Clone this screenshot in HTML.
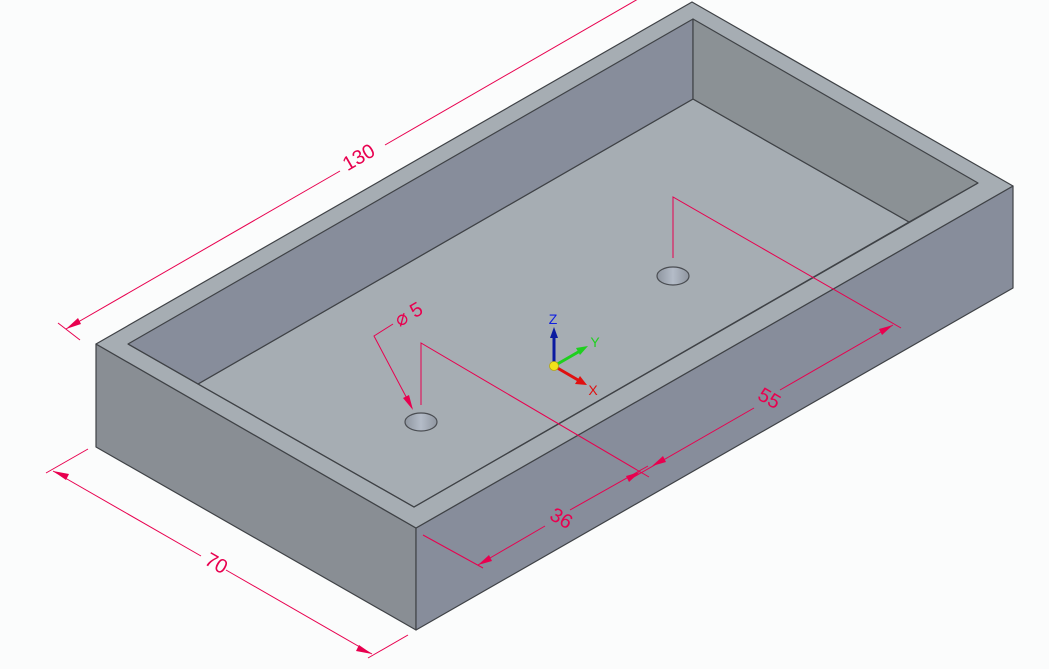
<!DOCTYPE html>
<html><head><meta charset="utf-8"><style>
html,body{margin:0;padding:0;background:#fbfcfc;}
svg{display:block}
text{font-family:"Liberation Sans",sans-serif;}
</style></head><body>
<svg width="1049" height="669" viewBox="0 0 1049 669" xmlns="http://www.w3.org/2000/svg">
<rect width="1049" height="669" fill="#fbfcfc"/>
<defs>
<linearGradient id="hole" x1="0" x2="1" y1="0" y2="0">
<stop offset="0" stop-color="#8f96a0"/><stop offset="0.5" stop-color="#b4bcc8"/><stop offset="1" stop-color="#8f96a0"/>
</linearGradient>
</defs>
<g stroke="#3f4246" stroke-width="1.2" stroke-linejoin="round">
<polygon points="96,344 416,528 416,630 96,447" fill="#898e94"/>
<polygon points="416,528 1013,186 1013,288 416,630" fill="#878d9b"/>
<polygon points="96,344 692,2 1013,186 416,528" fill="#a6adb3"/>
<polygon points="198,384 693,99 909,222 414,507" fill="#a6adb3"/>
<polygon points="128,344 693,19 693,99 198,384" fill="#878d9b"/>
<polygon points="693,19 978,183 909,222 693,99" fill="#8b9195"/>
<polyline points="198,384 128,344" fill="none"/>
<polyline points="978,183 414,507 198,384" fill="none"/>
</g>
<ellipse cx="421" cy="422" rx="16" ry="9" fill="url(#hole)" stroke="#4a4d52" stroke-width="1.2"/>
<ellipse cx="673" cy="276" rx="16" ry="9" fill="url(#hole)" stroke="#4a4d52" stroke-width="1.2"/>
<g stroke="#e8004f" stroke-width="1" fill="none">
<line x1="58" y1="323" x2="80" y2="340"/>
<line x1="66" y1="329" x2="340" y2="171"/>
<line x1="385" y1="145" x2="638" y2="-1"/>
<line x1="46" y1="473" x2="88" y2="449"/>
<line x1="368" y1="658" x2="408" y2="635"/>
<line x1="53" y1="471" x2="201" y2="556"/>
<line x1="226" y1="570" x2="372" y2="654"/>
<polyline points="421,405 421,343 649,477"/>
<polyline points="673,258 673,197 901,328"/>
<line x1="423" y1="535" x2="483" y2="568"/>
<line x1="478" y1="565" x2="545" y2="526"/>
<line x1="570" y1="510" x2="648" y2="466"/>
<line x1="632" y1="478" x2="754" y2="408"/>
<line x1="780" y1="390" x2="893" y2="325"/>
<polyline points="393,324 374,336 412,408"/>
</g>
<g fill="#e8004f">
<polygon points="66,329 78,318 81,324"/>
<polygon points="53,471 69,474 66,480"/>
<polygon points="372,654 356,651 359,645"/>
<polygon points="478,565 489,555 492,561"/>
<polygon points="640,472 629,482 626,476"/>
<polygon points="652,466 663,456 666,462"/>
<polygon points="893,325 882,335 879,329"/>
<polygon points="413,410 403,398 409,395"/>
</g>
<g fill="#e8004f" font-size="20">
<text x="362" y="163" transform="rotate(-30 362 163)" text-anchor="middle">130</text>
<text x="213" y="569" transform="rotate(30 213 569)" text-anchor="middle">70</text>
<text x="558" y="524" transform="rotate(30 558 524)" text-anchor="middle">36</text>
<text x="766" y="404" transform="rotate(30 766 404)" text-anchor="middle">55</text>
<text x="412" y="320" transform="rotate(-30 412 320)" text-anchor="middle">⌀ 5</text>
</g>
<g stroke-linecap="round">
<line x1="554" y1="366" x2="554" y2="334" stroke="#0a1aa0" stroke-width="3"/>
<polygon points="554,327 550,338 558,338" fill="#0a1aa0"/>
<line x1="554" y1="366" x2="580" y2="351" stroke="#1ed01e" stroke-width="3"/>
<polygon points="588,346 576,348 580,355" fill="#1ed01e"/>
<line x1="554" y1="366" x2="578" y2="380" stroke="#e01010" stroke-width="3"/>
<polygon points="587,385 580,376 575,384" fill="#e01010"/>
<circle cx="554" cy="366" r="4.5" fill="#f2e21a" stroke="#b5a810" stroke-width="0.8"/>
</g>
<text x="553" y="324" font-size="14" fill="#1020e0" text-anchor="middle">Z</text>
<text x="595" y="347" font-size="14" fill="#20d020" text-anchor="middle">Y</text>
<text x="593" y="395" font-size="14" fill="#e01010" text-anchor="middle">X</text>
</svg>
</body></html>
